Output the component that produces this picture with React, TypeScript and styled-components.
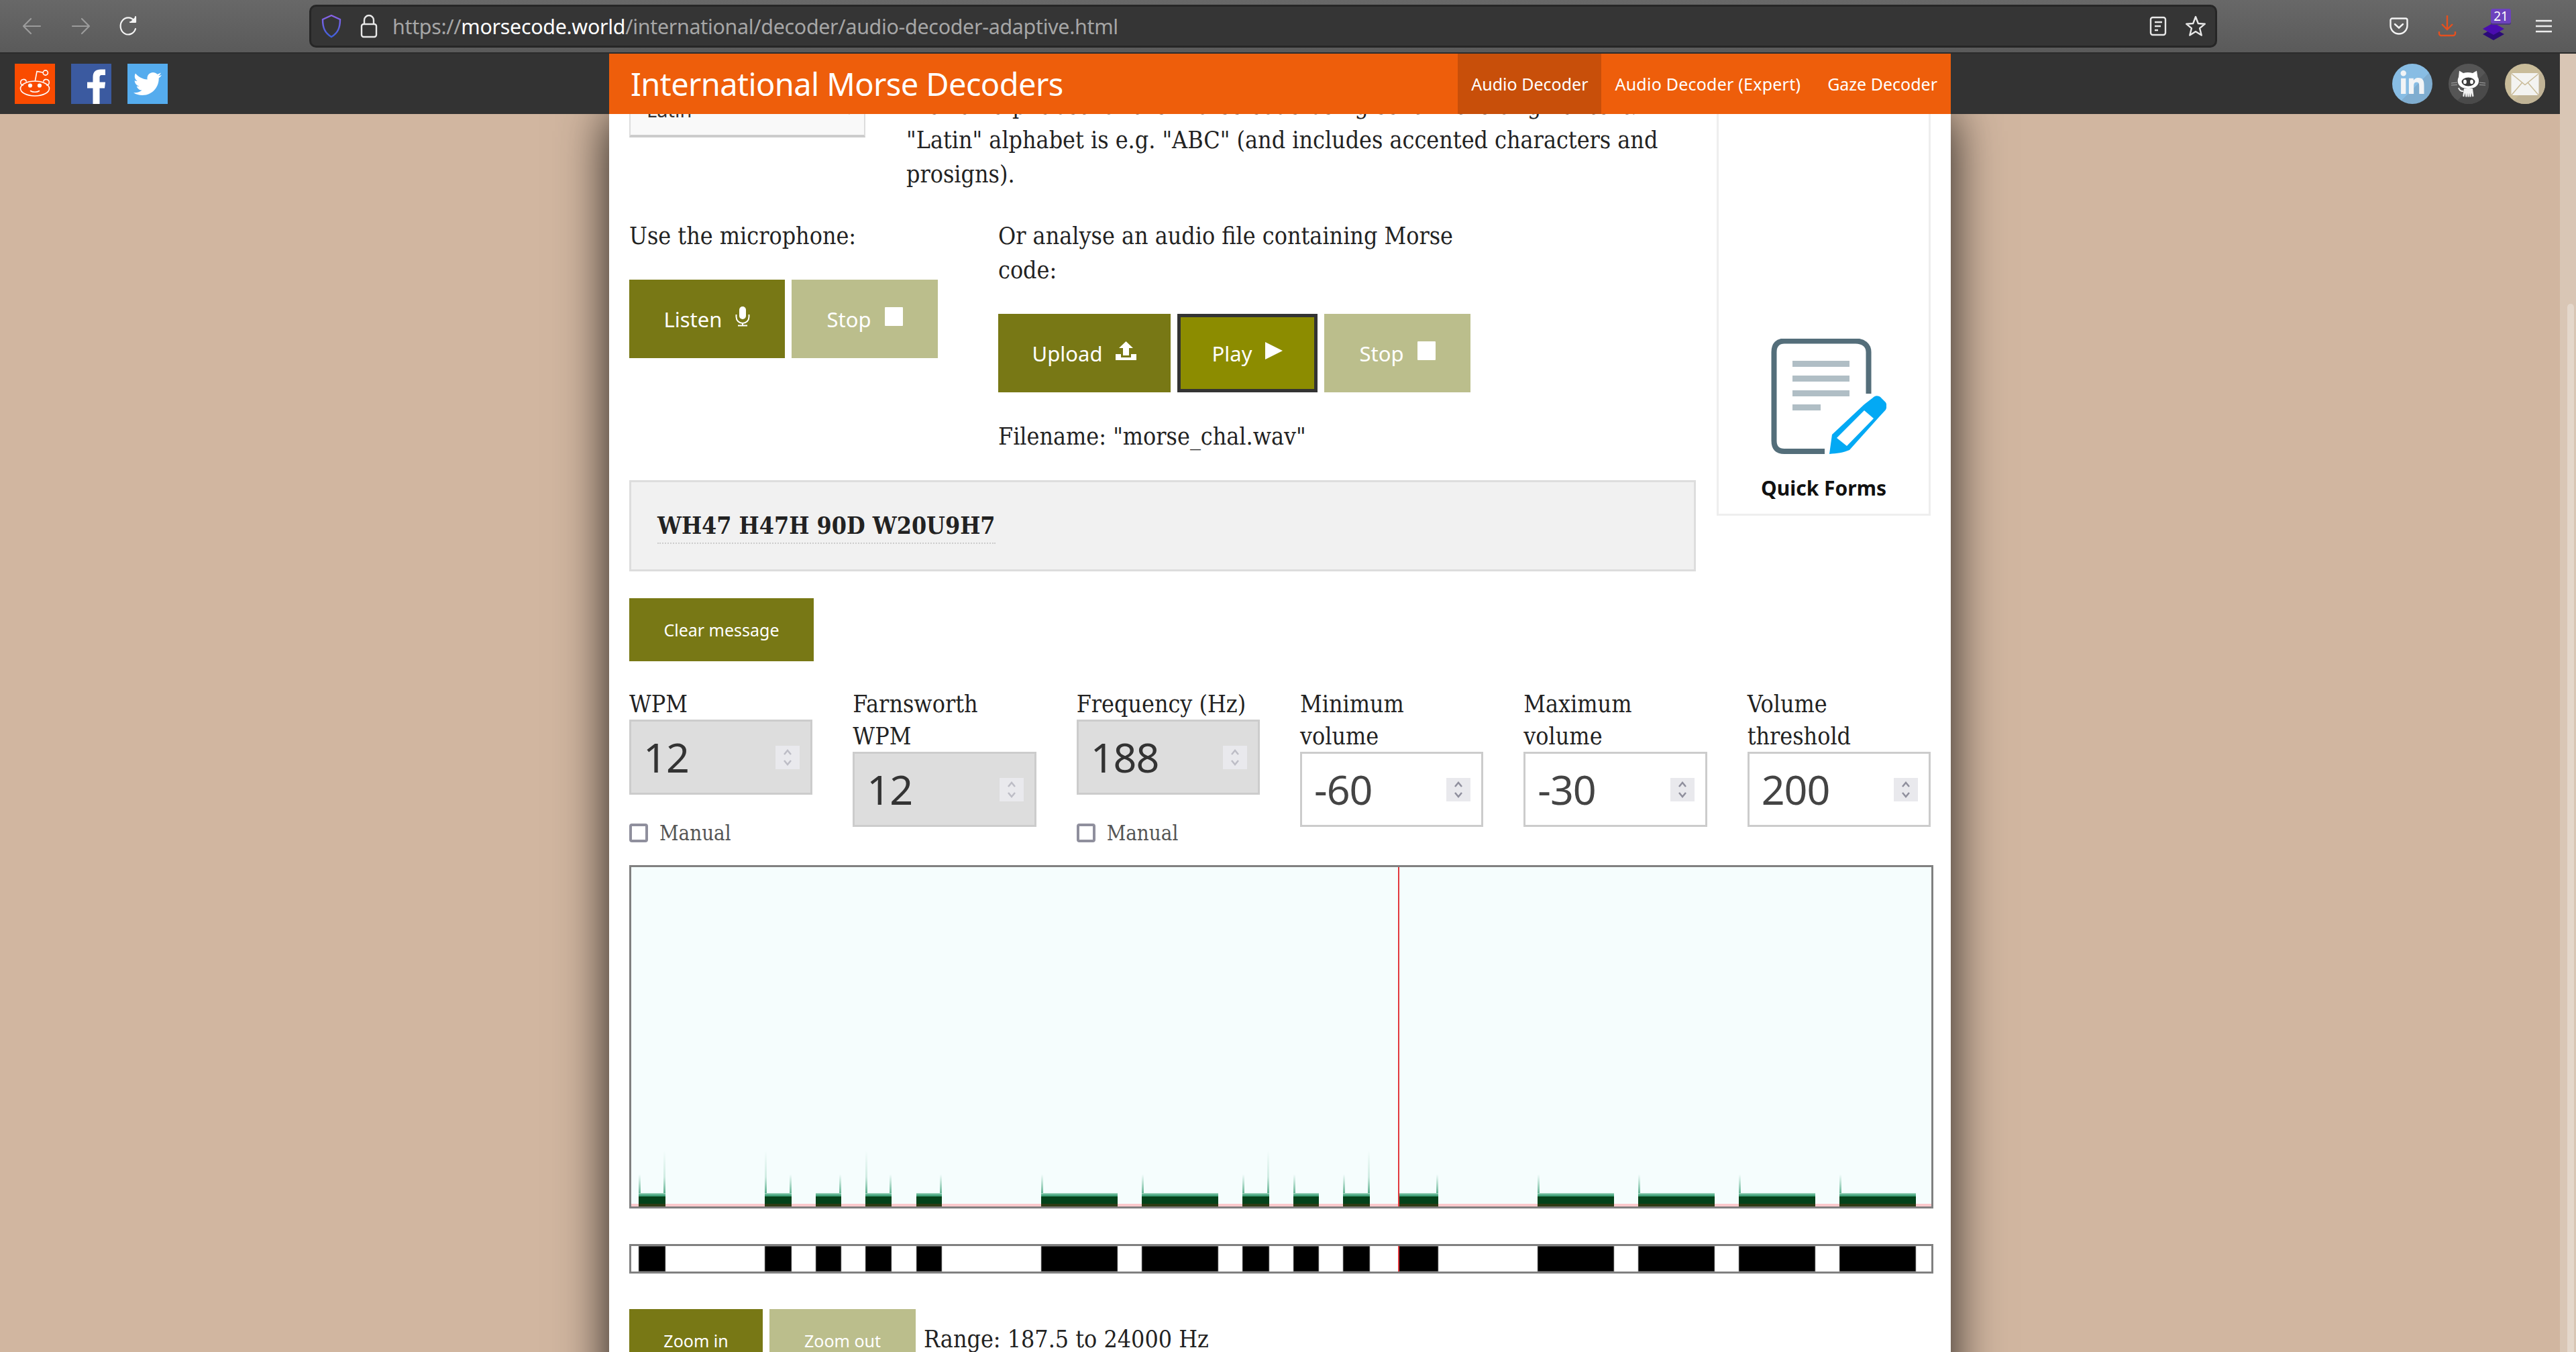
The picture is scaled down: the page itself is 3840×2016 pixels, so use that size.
import styled, { createGlobalStyle } from 'styled-components';
import { FaLinkedinIn, FaTwitter } from 'react-icons/fa';

const serif = '"DejaVu Serif Condensed", "DejaVu Serif", serif';
const sans = '"Noto Sans", "Open Sans", sans-serif';

const GlobalStyle = createGlobalStyle`
  html, body {
    margin: 0;
    height: 100%;
    overflow: hidden;
    background: #d1b6a0;
  }
`;

const Screen = styled.div`
  display: flex;
  flex-direction: column;
  width: 3840px;
  height: 2016px;
  overflow: hidden;
`;

/* browser chrome */
const Toolbar = styled.div`
  flex: none;
  display: flex;
  align-items: center;
  height: 78px;
  padding-left: 32px;
  background: linear-gradient(#686868, #5a5a5a);
  border-bottom: 2px solid #2b2b2b;
`;

const NavIcon = styled.svg`
  width: 32px;
  height: 32px;
  margin-right: 40px;
  fill: none;
  stroke-width: 2.2;
  stroke-linecap: round;
  stroke-linejoin: round;
`;

const UrlBar = styled.div`
  display: flex;
  align-items: center;
  box-sizing: border-box;
  width: 2844px;
  height: 64px;
  margin-left: 213px;
  padding: 0 14px 0 15px;
  background: #353535;
  border: 3px solid #262626;
  border-radius: 10px;
  font-family: ${sans};
  font-size: 30.4px;
  color: #a6a6a6;
`;

const UrlIcon = styled.svg<{ $gap?: number }>`
  flex: none;
  width: 30px;
  height: 36px;
  margin-left: ${({ $gap }) => $gap ?? 0}px;
  fill: none;
`;

const UrlText = styled.span`
  margin-left: 20px;
  letter-spacing: -0.3px;
  b {
    font-weight: 400;
    color: #fff;
  }
`;

const UrlEnd = styled.div`
  display: flex;
  align-items: center;
  gap: 26px;
  margin-left: auto;
`;

const ToolSlots = styled.div`
  display: flex;
  margin-left: auto;
  margin-right: 12px;
`;

const ToolSlot = styled.div`
  position: relative;
  display: flex;
  align-items: center;
  justify-content: center;
  width: 72px;
  height: 78px;
`;

const Layers = styled.svg`
  margin-top: 16px;
  margin-left: -6px;
`;

const Badge = styled.span`
  position: absolute;
  top: 13px;
  left: 29px;
  width: 30px;
  height: 22px;
  background: #6d43bd;
  border-radius: 3px;
  box-shadow: 0 2px 0 #4b3a7a;
  font-family: ${sans};
  font-size: 19px;
  line-height: 22px;
  text-align: center;
  color: #fff;
`;

/* site */
const Body = styled.div`
  flex: 1;
  display: flex;
  min-height: 0;
`;

const Viewport = styled.div`
  flex: 1;
  display: flex;
  flex-direction: column;
  min-width: 0;
`;

const Scrollbar = styled.div`
  flex: none;
  width: 24px;
  padding-top: 373px;
  background: #d9c6b5;
`;

const ScrollThumb = styled.div`
  width: 10px;
  height: 1700px;
  margin-left: 11px;
  border-radius: 5px;
  background: #e4d7cb;
`;

const TopBar = styled.header`
  position: relative;
  z-index: 2;
  flex: none;
  display: flex;
  justify-content: space-between;
  height: 90px;
  background: #333;
`;

const SocialGroup = styled.div`
  display: flex;
  align-items: center;
  gap: 24px;
  width: 860px;
  padding: 0 22px;
`;

const SocialGroupRight = styled(SocialGroup)`
  justify-content: flex-end;
`;

const SquareIcon = styled.div<{ $bg: string }>`
  display: flex;
  align-items: center;
  justify-content: center;
  width: 60px;
  height: 60px;
  overflow: hidden;
  background: ${({ $bg }) => $bg};
  color: #fff;
`;

const RoundIcon = styled(SquareIcon)`
  border-radius: 50%;
`;

const SiteBar = styled.div`
  display: flex;
  align-items: center;
  width: 2000px;
  background: #ee5e0b;
  color: #fff;
  font-family: ${sans};
`;

const SiteTitle = styled.div`
  flex: 1;
  padding-left: 32px;
  font-size: 47px;
  letter-spacing: -0.6px;
`;

const NavItem = styled.div<{ $active?: boolean; $tracking?: number }>`
  display: flex;
  align-items: center;
  height: 100%;
  padding: 0 20px;
  background: ${({ $active }) => ($active ? '#c84f0a' : 'transparent')};
  font-size: 25px;
  letter-spacing: ${({ $tracking }) => $tracking ?? 0}px;
`;

const ScrollArea = styled.div`
  flex: 1;
  min-height: 0;
  overflow: hidden;
`;

const Page = styled.main`
  box-sizing: border-box;
  width: 2000px;
  height: 2600px;
  margin: 0 auto;
  padding: 1px 30px 0;
  background: #fff;
  box-shadow: 0 0 70px rgba(0, 0, 0, 0.85);
  color: #222;
  font-family: ${serif};
  font-size: 35.5px;
  line-height: 51px;
`;

const TopRow = styled.div`
  display: flex;
  gap: 31px;
  margin-top: -71px;
`;

const MainColumn = styled.div`
  width: 1590px;
`;

const IntroRow = styled.div`
  display: flex;
  gap: 61px;
`;

const SelectBox = styled.div`
  flex: none;
  display: flex;
  align-items: flex-end;
  justify-content: space-between;
  box-sizing: border-box;
  width: 352px;
  height: 105px;
  padding: 0 14px 20px 24px;
  background: #f9f9f9;
  border: 2px solid #ddd;
  border-bottom: 4px solid #ccc;
  font-family: ${sans};
  font-size: 29px;
  line-height: 34px;
  color: #333;
`;

const SelectArrow = styled.svg`
  margin-bottom: 10px;
`;

const IntroText = styled.p`
  margin: 32px 0 0;
`;

const SourceRow = styled.div`
  display: flex;
  margin-top: 41px;
`;

const MicColumn = styled.div`
  flex: none;
  width: 550px;
`;

const FileColumn = styled.div`
  flex: none;
  width: 704px;
`;

const Para = styled.p`
  margin: 0 0 40px;
`;

const FileName = styled.p`
  margin: 40px 0 0;
`;

const ButtonRow = styled.div`
  display: flex;
  gap: 10px;
`;

const Button = styled.button<{ $width: number; $pale?: boolean; $focused?: boolean }>`
  display: flex;
  align-items: center;
  justify-content: center;
  gap: 20px;
  box-sizing: border-box;
  width: ${({ $width }) => $width}px;
  height: 117px;
  padding: 0;
  border: ${({ $focused }) => ($focused ? '5px solid #333' : 'none')};
  background: ${({ $pale, $focused }) => ($focused ? '#8c8c00' : $pale ? '#bbbe8c' : '#787815')};
  color: #fff;
  font-family: ${sans};
  font-size: 31px;
`;

const ButtonIcon = styled.svg<{ $w: number; $h: number }>`
  flex: none;
  width: ${({ $w }) => $w}px;
  height: ${({ $h }) => $h}px;
  margin-bottom: 8px;
  fill: #fff;
`;

const MessageBox = styled.div`
  box-sizing: border-box;
  display: flex;
  align-items: center;
  height: 136px;
  margin-top: 40px;
  padding-left: 39px;
  background: #f1f1f1;
  border: 3px solid #ddd;
  font-weight: 700;
`;

const MessageText = styled.span`
  border-bottom: 2px dotted #ccc;
`;

const QuickForms = styled.aside`
  flex: none;
  display: flex;
  flex-direction: column;
  align-items: center;
  justify-content: flex-end;
  box-sizing: border-box;
  width: 319px;
  height: 669px;
  padding-bottom: 16px;
  border: 3px solid #eee;
  font-family: ${sans};
  font-size: 30px;
  line-height: 44px;
  font-weight: 700;
  color: #111;
`;

const QuickIcon = styled.svg`
  width: 172px;
  height: 172px;
  margin-bottom: 29px;
  margin-left: 14px;
`;

const ClearButton = styled.button`
  display: block;
  width: 275px;
  height: 94px;
  margin-top: 40px;
  padding: 0;
  border: none;
  background: #787815;
  color: #fff;
  font-family: ${sans};
  font-size: 25px;
`;

const FieldGrid = styled.div`
  display: grid;
  grid-template-columns: repeat(6, 273.33px);
  column-gap: 60px;
  align-items: start;
  margin-top: 39px;
  line-height: 48px;
`;

const Field = styled.div`
  display: flex;
  flex-direction: column;
`;

const FieldLabel = styled.span`
  margin: 1px 0 -1px;
`;

const NumberBox = styled.div<{ $disabled?: boolean }>`
  display: flex;
  align-items: center;
  justify-content: space-between;
  box-sizing: border-box;
  height: 112px;
  padding: 0 16px 0 18px;
  background: ${({ $disabled }) => ($disabled ? '#ddd' : '#fff')};
  border: 3px solid #ccc;
  font-family: ${sans};
  font-size: 61px;
  line-height: 70px;
  letter-spacing: -1px;
  color: ${({ $disabled }) => ($disabled ? '#333' : '#444')};
`;

const Spinner = styled.svg<{ $disabled?: boolean }>`
  flex: none;
  width: 36px;
  height: 35px;
  background: #e9e9ed;
  stroke: ${({ $disabled }) => ($disabled ? '#bdbdc6' : '#8f8f9d')};
  stroke-width: 2.5;
  fill: none;
`;

const ManualRow = styled.label`
  display: flex;
  align-items: center;
  gap: 17px;
  height: 28px;
  margin-top: 43px;
  font-size: 31px;
  color: #555;
`;

const Checkbox = styled.span`
  flex: none;
  box-sizing: border-box;
  width: 28px;
  height: 28px;
  border: 4px solid #8f8f9d;
  border-radius: 4px;
  background: #fff;
`;

const Waterfall = styled.div`
  box-sizing: border-box;
  width: 1944px;
  height: 512px;
  margin-top: 34px;
  border: 3px solid #808080;
  svg {
    display: block;
  }
`;

const Strip = styled.div`
  box-sizing: border-box;
  width: 1944px;
  height: 44px;
  margin-top: 53px;
  border: 3px solid #808080;
  svg {
    display: block;
  }
`;

const ZoomRow = styled.div`
  display: flex;
  align-items: baseline;
  gap: 10px;
  margin-top: 53px;
`;

const ZoomButton = styled.button<{ $width: number; $pale?: boolean }>`
  width: ${({ $width }) => $width}px;
  height: 94px;
  padding: 0;
  border: none;
  background: ${({ $pale }) => ($pale ? '#bbbe8c' : '#787815')};
  color: #fff;
  font-family: ${sans};
  font-size: 25px;
`;

const RangeText = styled.span`
  margin-left: 2px;
`;

type Mark = { from: number; to: number; left?: number; right?: number };

// screen x of every tone; left/right give the top of the faint spike on that edge
const MARKS: Mark[] = [
  { from: 952, to: 992, left: 1750, right: 1715 },
  { from: 1140, to: 1180, left: 1715, right: 1750 },
  { from: 1216, to: 1254, right: 1750 },
  { from: 1290, to: 1329, left: 1715, right: 1750 },
  { from: 1366, to: 1404, right: 1750 },
  { from: 1552, to: 1666, left: 1750 },
  { from: 1702, to: 1816, left: 1750 },
  { from: 1852, to: 1892, left: 1750, right: 1715 },
  { from: 1928, to: 1966, left: 1750 },
  { from: 2002, to: 2042, left: 1750, right: 1715 },
  { from: 2085, to: 2144, right: 1750 },
  { from: 2292, to: 2406, left: 1750 },
  { from: 2442, to: 2556, left: 1750 },
  { from: 2592, to: 2706, left: 1750 },
  { from: 2742, to: 2856, left: 1750 },
];

const CANVAS_X = 941;
const CANVAS_Y = 1292;
const CURSOR_X = 2085;

const Spike = ({ x, top }: { x: number; top: number }) => (
  <rect
    x={x - CANVAS_X}
    y={top - CANVAS_Y}
    width={3}
    height={1780 - top}
    fill={top < 1740 ? 'url(#spikeTall)' : 'url(#spikeShort)'}
  />
);

const WaterfallPlot = () => (
  <svg width={1938} height={506} viewBox="0 0 1938 506">
    <defs>
      <linearGradient id="spikeTall" x1="0" y1="0" x2="0" y2="1">
        <stop offset="0" stopColor="#5fb892" stopOpacity="0" />
        <stop offset="0.6" stopColor="#5fb892" stopOpacity="0.25" />
        <stop offset="1" stopColor="#3f9f78" stopOpacity="0.9" />
      </linearGradient>
      <linearGradient id="spikeShort" x1="0" y1="0" x2="0" y2="1">
        <stop offset="0" stopColor="#5fb892" stopOpacity="0" />
        <stop offset="1" stopColor="#3f9f78" stopOpacity="0.85" />
      </linearGradient>
    </defs>
    <rect width={1938} height={506} fill="#f5fdfd" />
    <rect y={502} width={1938} height={4} fill="#fbc9cc" />
    {MARKS.map(({ from, to, left, right }) => (
      <g key={from}>
        {left && <Spike x={from} top={left} />}
        {right && <Spike x={to - 3} top={right} />}
        <rect x={from - CANVAS_X} y={486} width={to - from} height={2} fill="#8ccbb0" />
        <rect x={from - CANVAS_X} y={488} width={to - from} height={3} fill="#45a37c" />
        <rect x={from - CANVAS_X} y={491} width={to - from} height={11} fill="#04421a" />
        <rect x={from - CANVAS_X} y={502} width={to - from} height={4} fill="#2f3b14" />
      </g>
    ))}
    <rect x={CURSOR_X - CANVAS_X - 1} width={2} height={506} fill="#e2383d" />
  </svg>
);

const StripPlot = () => (
  <svg width={1938} height={38} viewBox="0 0 1938 38">
    <rect width={1938} height={38} fill="#fff" />
    {MARKS.map(({ from, to }) => (
      <rect
        key={from}
        x={from - CANVAS_X}
        width={to - from}
        height={38}
        fill="#000"
        stroke="#aaa"
        strokeWidth={0.8}
      />
    ))}
    <rect x={CURSOR_X - CANVAS_X - 1} width={2} height={38} fill="#e2383d" />
  </svg>
);

const RedditLogo = () => (
  <svg width={60} height={60} viewBox="0 0 60 60" fill="none" stroke="#fff" strokeWidth={1.6}>
    <ellipse cx={30} cy={37} rx={21.5} ry={11} />
    <path d="M12.8 32.2a4.4 4.4 0 1 1 4.6-5.4M47.2 32.2a4.4 4.4 0 1 0-4.6-5.4" />
    <path d="M30.3 26 L33 11.5 L41.8 13" />
    <circle cx={45.8} cy={13.5} r={3.6} />
    <circle cx={23} cy={32.5} r={3.1} fill="#fff" stroke="none" />
    <circle cx={37} cy={32.5} r={3.1} fill="#fff" stroke="none" />
    <path d="M23.5 40.5c3.5 2.4 9.5 2.4 13 0" strokeLinecap="round" />
  </svg>
);

const FacebookLogo = () => (
  <svg width={60} height={60} viewBox="0 0 60 60" fill="#fff">
    <path d="M32.5 60V36.5H24v-9h8.5V20c0-8 4.5-11.5 11.5-11.5h7V17h-5c-3 0-3.5 1.5-3.5 4v6.500h8.500l-1 9h-7.500V60z" />
  </svg>
);

const OctocatLogo = () => (
  <svg width={60} height={60} viewBox="0 0 60 60">
    <path d="M60 8 8 60h44a8 8 0 0 0 8-8z" fill="#4a4a4a" />
    <path
      d="M16 10.500l6 3.500c4.500-1.300 9-1.300 14 0l6-3.500 1.500 9.500c1.700 2.300 1.800 5 1.500 7-.9 6-6 10-15.500 10S14.500 33 13.800 27c-.3-2 0-4.700 1.200-7z"
      fill="#fff"
    />
    <ellipse cx={29.500} cy={27} rx={10} ry={6.500} fill="#3b3b3b" />
    <ellipse cx={24.500} cy={27} rx={2.400} ry={3.300} fill="#fff" />
    <ellipse cx={34.500} cy={27} rx={2.400} ry={3.300} fill="#fff" />
    <path
      d="M23 37h13l1.500 11.500-2 1-1.300-6-.7 6h-2l-.5-6-.5 6h-2l-.5-6-.6 6h-2l-.8-6-1.400 6-2-1z"
      fill="#f2f2f2"
    />
    <path d="M22 41c-4 .5-6-2-7-5" fill="none" stroke="#f2f2f2" strokeWidth={2} />
    <path
      d="M4 29l9-1M4 32l9-.5M46 28l9 1M46 31.500l9 .5"
      fill="none"
      stroke="#bbb"
      strokeWidth={0.8}
    />
  </svg>
);

const MailLogo = () => (
  <svg width={60} height={60} viewBox="0 0 60 60">
    <path d="M60 8 8 60h44a8 8 0 0 0 8-8z" fill="#c0b396" />
    <rect x={9.500} y={14} width={41} height={33} rx={3} fill="#f3f3f1" />
    <path d="M10.500 15.500 30 31.500l19.500-16M10.500 46l15-17.500M49.500 46l-15-17.500" fill="none" stroke="#c9bb98" strokeWidth={1.500} />
  </svg>
);

const QuickFormsIcon = () => (
  <QuickIcon viewBox="0 0 172 172">
    <path
      d="M80 168H20C9 168 4.500 162 4.500 152V20C4.500 9 10 3.500 20 3.500h106c12 0 19.500 6.500 19.500 16.500v62"
      fill="none"
      stroke="#546e7a"
      strokeWidth={8}
    />
    <g fill="#b0bec5">
      <rect x={32} y={33} width={85} height={9} />
      <rect x={32} y={55} width={85} height={9} />
      <rect x={32} y={77} width={85} height={9} />
      <rect x={32} y={98} width={42} height={9} />
    </g>
    <path
      d="M87 172l4-29 48-45 13-10c4-4 8-3 11-1l7 7c3 3 3 8 1 12l-11 12-43 48c-9 4-19 5-30 6z"
      fill="#03a9f4"
    />
    <path d="M98 148l41-41 14 12-40 41z" fill="#fff" />
  </QuickIcon>
);

const MicIcon = () => (
  <ButtonIcon $w={22} $h={30} viewBox="0 0 22 30">
    <rect x={6} width={10} height={19} rx={5} />
    <path d="M1.500 12v3.500a9.500 9.500 0 0 0 19 0V12" fill="none" stroke="#fff" strokeWidth={2} />
    <rect x={10} y={24} width={2} height={4} />
    <rect x={4} y={27.500} width={14} height={2} />
  </ButtonIcon>
);

const StopIcon = () => (
  <ButtonIcon $w={27} $h={28} viewBox="0 0 27 28">
    <rect width={27} height={28} rx={1} />
  </ButtonIcon>
);

const UploadIcon = () => (
  <ButtonIcon $w={31} $h={28} viewBox="0 0 31 28">
    <path d="M15.500 0 26 10h-6v11h-9V10H5z" />
    <path d="M0 19h8v5h15v-5h8v9H0z" />
  </ButtonIcon>
);

const PlayIcon = () => (
  <ButtonIcon $w={26} $h={26} viewBox="0 0 26 26">
    <path d="M0 0 26 13 0 26z" />
  </ButtonIcon>
);

type FieldSpec = {
  label: string;
  value: string;
  disabled?: boolean;
  manual?: boolean;
};

const FIELDS: FieldSpec[] = [
  { label: 'WPM', value: '12', disabled: true, manual: true },
  { label: 'Farnsworth WPM', value: '12', disabled: true },
  { label: 'Frequency (Hz)', value: '188', disabled: true, manual: true },
  { label: 'Minimum volume', value: '-60' },
  { label: 'Maximum volume', value: '-30' },
  { label: 'Volume threshold', value: '200' },
];

const NumberField = ({ label, value, disabled, manual }: FieldSpec) => (
  <Field>
    <FieldLabel>{label}</FieldLabel>
    <NumberBox $disabled={disabled}>
      {value}
      <Spinner $disabled={disabled} viewBox="0 0 36 35">
        <path d="M13 13l5-6 5 6M13 22l5 6 5-6" />
      </Spinner>
    </NumberBox>
    {manual && (
      <ManualRow>
        <Checkbox />
        Manual
      </ManualRow>
    )}
  </Field>
);

const BrowserToolbar = () => (
  <Toolbar>
    <NavIcon viewBox="0 0 32 32" stroke="#9c9c9c">
      <path d="M28 16H4M14 5 3 16l11 11" />
    </NavIcon>
    <NavIcon viewBox="0 0 32 32" stroke="#9c9c9c">
      <path d="M4 16h24M18 5l11 11-11 11" />
    </NavIcon>
    <NavIcon viewBox="0 0 32 32" stroke="#f4f4f4">
      <path d="M26 20a11.500 12.500 0 1 1-2-12" />
      <path d="M26 2v8h-8" fill="#f4f4f4" />
    </NavIcon>
    <UrlBar>
      <UrlIcon viewBox="0 0 30 36">
        <defs>
          <linearGradient id="shield" x1="0" y1="0" x2="0" y2="1">
            <stop offset="0" stopColor="#8a63e8" />
            <stop offset="1" stopColor="#3f5fd8" />
          </linearGradient>
        </defs>
        <path
          d="M15 2 28 8c0 12-3 20-13 26C5 28 2 20 2 8z"
          stroke="url(#shield)"
          strokeWidth={2.400}
        />
      </UrlIcon>
      <UrlIcon $gap={26} viewBox="0 0 30 36">
        <rect x={4} y={15} width={22} height={19} rx={3} stroke="#e8e8e8" strokeWidth={2.400} />
        <path d="M8 15V9a7 7 0 0 1 14 0v6" stroke="#e8e8e8" strokeWidth={2.400} />
      </UrlIcon>
      <UrlText>
        https://<b>morsecode.world</b>/international/decoder/audio-decoder-adaptive.html
      </UrlText>
      <UrlEnd>
        <UrlIcon viewBox="0 0 30 36">
          <rect x={4} y={5} width={22} height={26} rx={3} stroke="#e8e8e8" strokeWidth={2.400} />
          <path d="M10 12h11M10 18h9M10 24h5" stroke="#e8e8e8" strokeWidth={2.400} />
        </UrlIcon>
        <UrlIcon viewBox="0 0 30 36">
          <path
            d="M15 4l3.800 10 10 .7-7.700 6.500 2.600 10.300L15 26l-8.700 5.500 2.600-10.300L1.200 14.700l10-.7z"
            stroke="#e8e8e8"
            strokeWidth={2.400}
            strokeLinejoin="round"
          />
        </UrlIcon>
      </UrlEnd>
    </UrlBar>
    <ToolSlots>
      <ToolSlot>
        <svg width={28} height={26} viewBox="0 0 28 26" fill="none" stroke="#f4f4f4" strokeWidth={2.400}>
          <path d="M4 1.500h20A2.500 2.500 0 0 1 26.500 4v8a12.500 12.500 0 0 1-25 0V4A2.500 2.500 0 0 1 4 1.500z" />
          <path d="M8 10l6 5.500L20 10" strokeLinecap="round" />
        </svg>
      </ToolSlot>
      <ToolSlot>
        <svg width={28} height={32} viewBox="0 0 28 32" fill="none" stroke="#e5501f" strokeWidth={2.400}>
          <path d="M14 0v20M6 13l8 8 8-8" />
          <path d="M2 24v3a3 3 0 0 0 3 3h18a3 3 0 0 0 3-3v-3" />
        </svg>
      </ToolSlot>
      <ToolSlot>
        <Layers width={34} height={26} viewBox="0 0 34 26">
          <path d="M17 8 33 17 17 26 1 17z" fill="#2b0a78" />
          <path d="M17 0 33 9 17 18 1 9z" fill="#4a0db0" />
        </Layers>
        <Badge>21</Badge>
      </ToolSlot>
      <ToolSlot>
        <svg width={24} height={20} viewBox="0 0 24 20" stroke="#eee" strokeWidth={2.400}>
          <path d="M0 2h24M0 10h24M0 18h24" />
        </svg>
      </ToolSlot>
    </ToolSlots>
  </Toolbar>
);

const SiteHeader = () => (
  <TopBar>
    <SocialGroup>
      <SquareIcon $bg="#fa4b00">
        <RedditLogo />
      </SquareIcon>
      <SquareIcon $bg="#3b5aa0">
        <FacebookLogo />
      </SquareIcon>
      <SquareIcon $bg="#55acee">
        <FaTwitter size={42} />
      </SquareIcon>
    </SocialGroup>
    <SiteBar>
      <SiteTitle>International Morse Decoders</SiteTitle>
      <NavItem $active>Audio Decoder</NavItem>
      <NavItem $tracking={0.23}>Audio Decoder (Expert)</NavItem>
      <NavItem>Gaze Decoder</NavItem>
    </SiteBar>
    <SocialGroupRight>
      <RoundIcon $bg="linear-gradient(135deg, #88bde4 57%, #7fadd0 57%)">
        <FaLinkedinIn size={40} color="#f2f4f6" />
      </RoundIcon>
      <RoundIcon $bg="#555">
        <OctocatLogo />
      </RoundIcon>
      <RoundIcon $bg="#c9bc9a">
        <MailLogo />
      </RoundIcon>
    </SocialGroupRight>
  </TopBar>
);

const App = () => (
  <Screen>
    <GlobalStyle />
    <BrowserToolbar />
    <Body>
      <Viewport>
        <SiteHeader />
        <ScrollArea>
          <Page>
            <TopRow>
              <MainColumn>
                <IntroRow>
                  <SelectBox>
                    Latin
                    <SelectArrow width={16} height={10} viewBox="0 0 16 10" fill="none" stroke="#333" strokeWidth={2}>
                      <path d="M2 1l6 7 6-7" />
                    </SelectArrow>
                  </SelectBox>
                  <IntroText>
                    Pick an alphabet for the Morse code being sent in the original text. "Latin"
                    alphabet is e.g. "ABC" (and includes accented characters and prosigns).
                  </IntroText>
                </IntroRow>
                <SourceRow>
                  <MicColumn>
                    <Para>Use the microphone:</Para>
                    <ButtonRow>
                      <Button $width={232}>
                        Listen
                        <MicIcon />
                      </Button>
                      <Button $width={218} $pale>
                        Stop
                        <StopIcon />
                      </Button>
                    </ButtonRow>
                  </MicColumn>
                  <FileColumn>
                    <Para>Or analyse an audio file containing Morse code:</Para>
                    <ButtonRow>
                      <Button $width={257}>
                        Upload
                        <UploadIcon />
                      </Button>
                      <Button $width={209} $focused>
                        Play
                        <PlayIcon />
                      </Button>
                      <Button $width={218} $pale>
                        Stop
                        <StopIcon />
                      </Button>
                    </ButtonRow>
                    <FileName>Filename: "morse_chal.wav"</FileName>
                  </FileColumn>
                </SourceRow>
                <MessageBox>
                  <MessageText>WH47 H47H 90D W20U9H7</MessageText>
                </MessageBox>
              </MainColumn>
              <QuickForms>
                <QuickFormsIcon />
                Quick Forms
              </QuickForms>
            </TopRow>
            <ClearButton>Clear message</ClearButton>
            <FieldGrid>
              {FIELDS.map((field) => (
                <NumberField key={field.label} {...field} />
              ))}
            </FieldGrid>
            <Waterfall>
              <WaterfallPlot />
            </Waterfall>
            <Strip>
              <StripPlot />
            </Strip>
            <ZoomRow>
              <ZoomButton $width={199}>Zoom in</ZoomButton>
              <ZoomButton $width={218} $pale>
                Zoom out
              </ZoomButton>
              <RangeText>Range: 187.5 to 24000 Hz</RangeText>
            </ZoomRow>
          </Page>
        </ScrollArea>
      </Viewport>
      <Scrollbar>
        <ScrollThumb />
      </Scrollbar>
    </Body>
  </Screen>
);

export default App;
